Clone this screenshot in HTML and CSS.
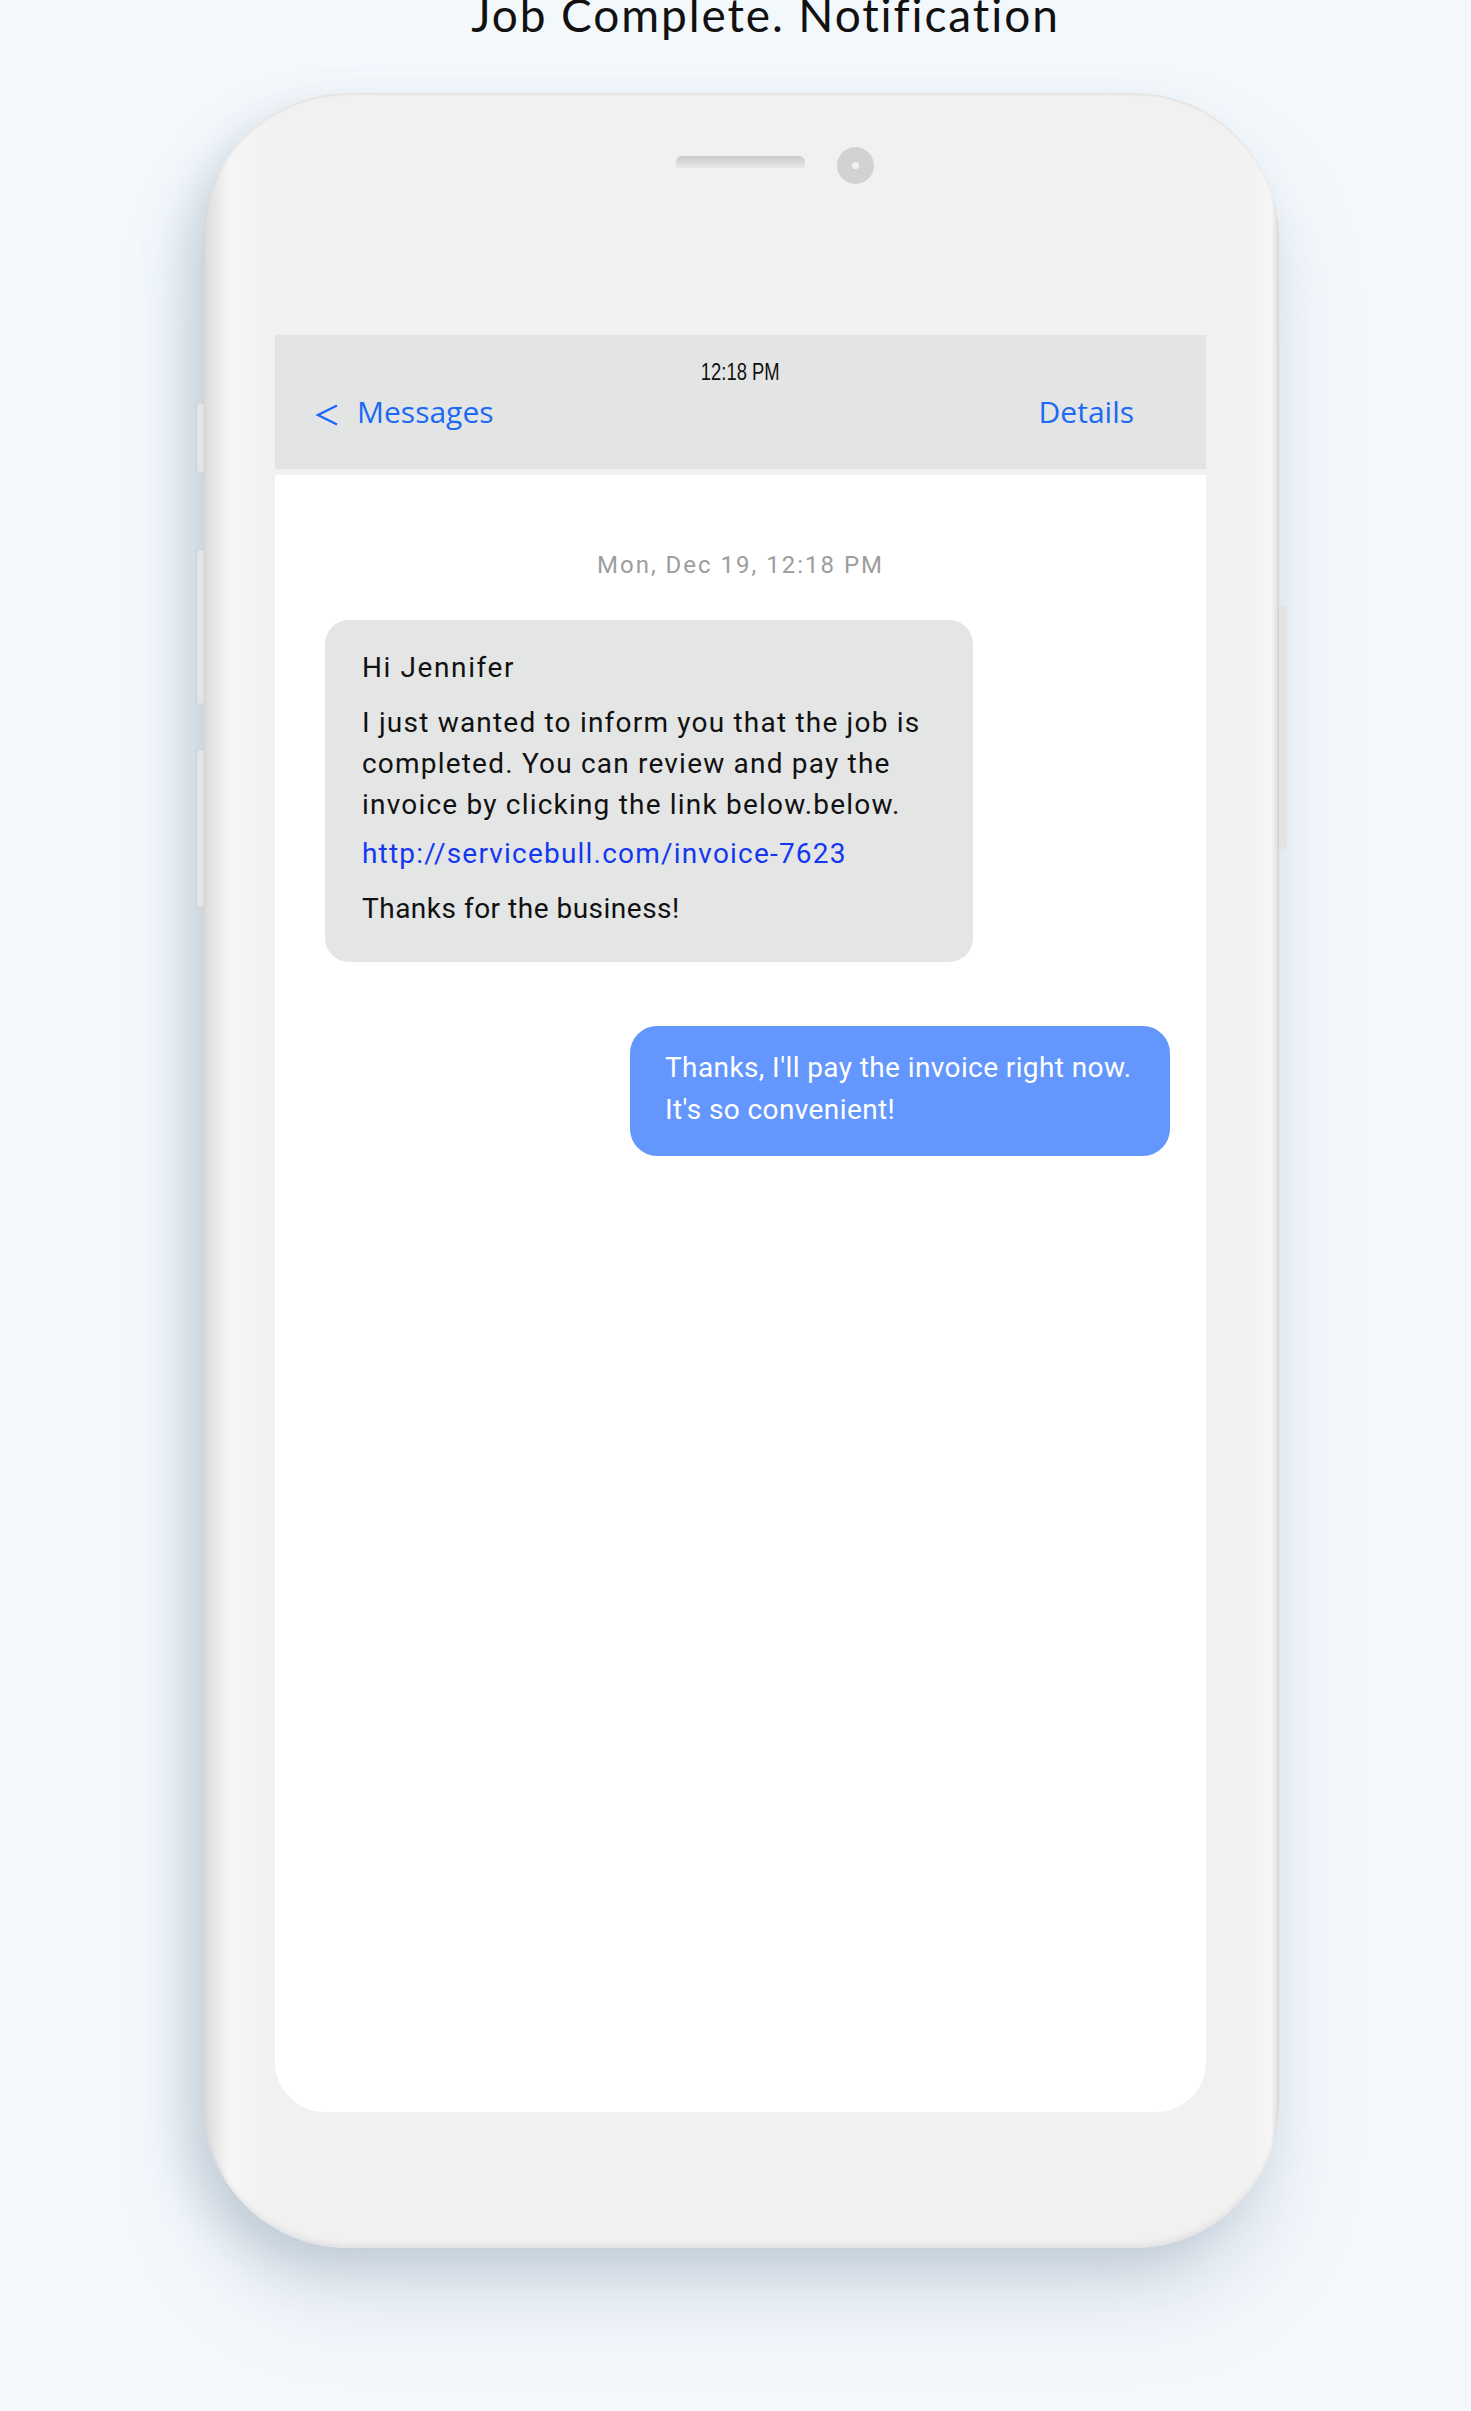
FILE: index.html
```html
<!DOCTYPE html>
<html lang="en">
<head>
    <meta charset="UTF-8">
    <meta name="viewport" content="width=device-width, initial-scale=1.0">
    <title>Job Complete. Notification</title>
    <link rel="stylesheet" href="styles.css">
</head>
<body>

    <h1 class="title">Job Complete. Notification</h1>

    <div class="phone">
        <span class="side-btn side-btn-mute"></span>
        <span class="side-btn side-btn-up"></span>
        <span class="side-btn side-btn-down"></span>
        <span class="side-btn side-btn-power"></span>

        <div class="phone-top">
            <span></span>
            <span class="speaker"></span>
            <span class="camera"></span>
        </div>

        <div class="screen">
            <div class="nav">
                <div class="nav-time"><span>12:18 PM</span></div>
                <div class="nav-row">
                    <a class="nav-back" href="#">
                        <svg width="24" height="22" viewBox="0 0 24 22">
                            <polyline points="22,1.5 3,11 22,20.5" fill="none" stroke="currentColor" stroke-width="2.4" stroke-linejoin="miter"/>
                        </svg>
                        Messages
                    </a>
                    <a class="nav-details" href="#">Details</a>
                </div>
            </div>

            <div class="thread">
                <p class="thread-date">Mon, Dec 19, 12:18 PM</p>

                <div class="bubble bubble-in">
                    <p class="greeting">Hi Jennifer</p>
                    <p class="body">I just wanted to inform you that the job is completed. You can review and pay the invoice by clicking the link below.below.</p>
                    <p class="link"><a href="#">http://servicebull.com/invoice-7623</a></p>
                    <p class="thanks">Thanks for the business!</p>
                </div>

                <div class="bubble bubble-out">
                    <p>Thanks, I'll pay the invoice right now. It's so convenient!</p>
                </div>
            </div>
        </div>
    </div>

</body>
</html>
```

FILE: styles.css
```css
body {
    margin: 0;
    padding-bottom: 160px;
    background: #f3f8fc;
    color: #111;
    font-family: 'Roboto', 'Liberation Sans', sans-serif;
}

.title {
    margin: -8px 0 0 60px;
    font-family: 'Lato', 'Liberation Sans', sans-serif;
    font-size: 46px;
    font-weight: 400;
    line-height: 46px;
    letter-spacing: 1.9px;
    text-align: center;
    color: #111;
}

/* phone body */
.phone {
    position: relative;
    box-sizing: border-box;
    width: 1076px;
    height: 2155px;
    margin: 55px 0 0 203px;
    padding: 0 73px 0 72px;
    border-radius: 145px;
    background: linear-gradient(90deg, #d9d9d9 0, #f6f6f6 26px, #f1f1f1 72px, #f1f1f1 calc(100% - 34px), #f6f6f6 calc(100% - 8px), #dcdcdc 100%);
    box-shadow:
        inset 0 2px 2px rgba(0, 0, 0, 0.06),
        inset 0 -5px 6px -2px rgba(0, 0, 0, 0.07),
        -18px 20px 40px rgba(150, 165, 182, 0.38),
        0 55px 80px rgba(165, 180, 198, 0.28);
}

.side-btn {
    position: absolute;
    width: 7px;
    background: #e4e4e4;
    border-radius: 3px;
    box-shadow: 0 0 2px rgba(0, 0, 0, 0.12);
}

.side-btn-mute { left: -6px; top: 310px; height: 70px; }
.side-btn-up { left: -6px; top: 457px; height: 154px; }
.side-btn-down { left: -6px; top: 657px; height: 157px; }
.side-btn-power { right: -7px; top: 514px; height: 241px; }

.phone-top {
    display: grid;
    grid-template-columns: 1fr auto 1fr;
    align-items: start;
    height: 242px;
}

.speaker {
    width: 129px;
    height: 12px;
    margin-top: 63px;
    border-radius: 6px 6px 2px 2px;
    background: linear-gradient(#c9c9c9 0, #d6d6d6 40%, #e8e8e8 100%);
}

.camera {
    position: relative;
    width: 37px;
    height: 37px;
    margin: 54px 0 0 32px;
    border-radius: 50%;
    background: #d2d2d2;
}

.camera::after {
    content: "";
    position: absolute;
    left: 15px;
    top: 15px;
    width: 7px;
    height: 7px;
    border-radius: 50%;
    background: #f2f2f2;
}

/* screen */
.screen {
    height: 1777px;
    background: #fff;
    border-radius: 0 0 50px 50px;
    overflow: hidden;
}

.nav {
    box-sizing: border-box;
    height: 140px;
    padding-top: 25px;
    background: #e3e4e4;
    border-bottom: 6px solid #f1f1f1;
}

.nav-time {
    font-family: 'Liberation Sans', sans-serif;
    font-size: 23px;
    line-height: 24px;
    text-align: center;
    color: #111;
}

.nav-time span {
    display: inline-block;
    transform: scaleX(0.8);
}

.nav-row {
    display: flex;
    justify-content: space-between;
    align-items: center;
    margin-top: 13px;
    padding: 0 72px 0 40px;
    font-family: 'Open Sans', sans-serif;
    font-size: 30px;
    line-height: 30px;
}

.nav-row a {
    color: #1b69f5;
    text-decoration: none;
}

.nav-back {
    display: flex;
    align-items: center;
    gap: 18px;
}

.nav-back svg {
    margin-top: 5px;
}

/* messages */
.thread {
    display: flex;
    flex-direction: column;
    padding: 75px 36px 0 36px;
}

.thread-date {
    margin: 0 0 40px;
    font-size: 24px;
    line-height: 30px;
    letter-spacing: 2px;
    text-align: center;
    color: #9d9d9d;
}

.bubble p {
    margin: 0;
}

.bubble-in {
    align-self: flex-start;
    box-sizing: border-box;
    width: 648px;
    margin-left: 14px;
    padding: 27px 20px 33px 37px;
    border-radius: 24px;
    background: #e4e5e5;
    font-size: 28px;
    line-height: 41px;
    letter-spacing: 1.2px;
    color: #111;
}

.bubble-in .greeting {
    letter-spacing: 1.6px;
}

.bubble-in .body {
    margin-top: 14px;
}

.bubble-in .link {
    margin: 8px 0 14px;
}

.bubble-in .link a {
    color: #1438f2;
    text-decoration: none;
}

.bubble-in .thanks {
    letter-spacing: 0.5px;
}

.bubble-out {
    align-self: flex-end;
    box-sizing: border-box;
    width: 540px;
    margin-top: 64px;
    padding: 21px 18px 25px 35px;
    border-radius: 27px;
    background: #6497fd;
    color: #fff;
    font-size: 28px;
    line-height: 42px;
    letter-spacing: 0.4px;
}
```
